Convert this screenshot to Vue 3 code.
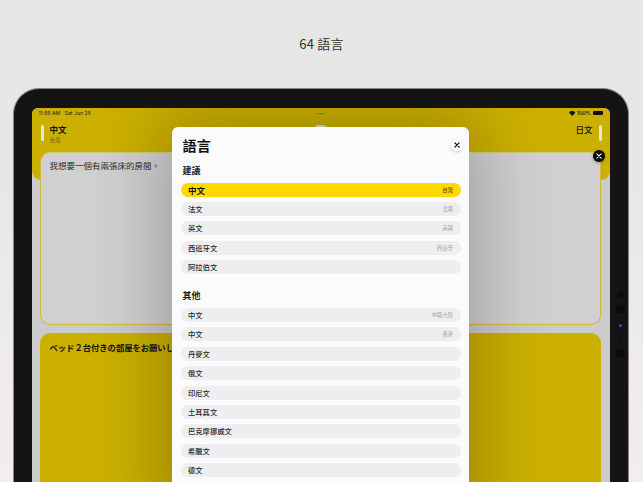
<script setup>
const suggested = [
  { name: '中文', region: '台灣', active: true },
  { name: '法文', region: '法國' },
  { name: '英文', region: '美國' },
  { name: '西班牙文', region: '西班牙' },
  { name: '阿拉伯文', region: '' },
]
const others = [
  { name: '中文', region: '中國大陸' },
  { name: '中文', region: '香港' },
  { name: '丹麥文', region: '' },
  { name: '俄文', region: '' },
  { name: '印尼文', region: '' },
  { name: '土耳其文', region: '' },
  { name: '巴克摩挪威文', region: '' },
  { name: '希臘文', region: '' },
  { name: '德文', region: '' },
]
const sensors = [
  { size: 7, gap: 0, color: '#0b0b0b' },
  { size: 9, gap: 7, color: '#0b0b0b' },
  { size: 3, gap: 10, color: '#1f58b0' },
  { size: 2, gap: 10.5, color: '#050505' },
  { size: 9, gap: 9.5, color: '#0b0b0b' },
]
</script>

<template>
  <div class="page">
    <h1 class="headline">64 語言</h1>
    <div class="device">
      <div class="screen">
        <header class="top">
          <div class="status">
            <span class="status-left">11:55 AM&nbsp;&nbsp; Sat Jun 25</span>
            <span class="status-dots">•••</span>
            <span class="status-right">
              <svg class="wifi" viewBox="0 0 12 9" width="6.5" height="5">
                <path d="M6 9 L0 2.6 C3.4 -.8 8.6 -.8 12 2.6 Z" fill="#111" />
              </svg>
              100%
              <span class="battery"></span>
            </span>
          </div>
          <div class="langs">
            <div class="lang-left">
              <span class="handle"></span>
              <div class="lang-text">
                <div class="lang-name">中文</div>
                <div class="lang-sub">台灣</div>
              </div>
            </div>
            <div class="lang-right">
              <div class="lang-text lang-name">日文</div>
              <span class="handle"></span>
            </div>
          </div>
        </header>

        <div class="cards">
          <section class="card card-source">
            我想要一個有兩張床的房間。
            <span class="dismiss">
              <svg viewBox="0 0 10 10" width="6" height="6">
                <path d="M1.5 1.5 L8.5 8.5 M8.5 1.5 L1.5 8.5" stroke="#fff" stroke-width="2" stroke-linecap="round" />
              </svg>
            </span>
          </section>
          <section class="card card-target">ベッド２台付きの部屋をお願いします。</section>
        </div>

        <div class="grabber"></div>
        <aside class="sheet">
          <div class="sheet-head">
            <h2 class="sheet-title">語言</h2>
            <span class="close">
              <svg viewBox="0 0 10 10" width="6" height="6">
                <path d="M1.5 1.5 L8.5 8.5 M8.5 1.5 L1.5 8.5" stroke="#111" stroke-width="2.2" stroke-linecap="round" />
              </svg>
            </span>
          </div>
          <h3 class="group-title">建議</h3>
          <ul class="rows">
            <li v-for="r in suggested" :key="r.name" class="row" :class="{ active: r.active }">
              <span>{{ r.name }}</span><small>{{ r.region }}</small>
            </li>
          </ul>
          <h3 class="group-title second">其他</h3>
          <ul class="rows">
            <li v-for="r in others" :key="r.name + r.region" class="row">
              <span>{{ r.name }}</span><small>{{ r.region }}</small>
            </li>
          </ul>
        </aside>
      </div>
      <div class="sensors">
        <i v-for="(s, i) in sensors" :key="i" :style="{ width: s.size + 'px', height: s.size + 'px', marginTop: s.gap + 'px', background: s.color }"></i>
      </div>
    </div>
  </div>
</template>

<style>
html, body { margin: 0; padding: 0; }
</style>

<style scoped>
.page {
  width: 643px;
  height: 482px;
  overflow: hidden;
  background: linear-gradient(180deg, #e6e6e6 0%, #e8e7e7 40%, #f3eeee 100%);
  font-family: "Noto Sans CJK TC", "Noto Sans", sans-serif;
  color: #111;
}
.headline {
  margin: 0;
  height: 88px;
  padding-top: 35px;
  box-sizing: border-box;
  text-align: center;
  font-size: 13px;
  line-height: 17px;
  font-weight: 400;
  color: #33332a;
  letter-spacing: .2px;
}
.device {
  position: relative;
  margin-left: 13px;
  width: 616px;
  height: 500px;
  box-sizing: border-box;
  padding: 18.5px 18.5px 0 17.5px;
  background: #141414;
  border: 1.5px solid #85858a;
  border-bottom: 0;
  border-radius: 26px 26px 0 0;
}
.screen {
  position: relative;
  height: 480px;
  overflow: hidden;
  border-radius: 6px 6px 0 0;
  background: #cbcbcb;
}
.top {
  height: 72px;
  box-sizing: border-box;
  background: #ccb000;
  border-radius: 0 0 9px 9px;
  padding: 2px 7px 0 7px;
}
.status {
  position: relative;
  display: flex;
  justify-content: space-between;
  align-items: center;
  height: 7px;
  font: 5.2px/7px "Inter", "Liberation Sans", sans-serif;
  color: #222;
}
.status-dots {
  position: absolute;
  left: 0;
  right: 0;
  text-align: center;
  font-size: 4px;
  color: #6c5f00;
  letter-spacing: .3px;
}
.status-right {
  display: flex;
  align-items: center;
  gap: 1.5px;
  font-weight: 600;
}
.battery {
  width: 10px;
  height: 4px;
  border-radius: 1px;
  background: #111;
}
.wifi { display: block; }
.langs {
  display: flex;
  justify-content: space-between;
  margin-top: 8px;
  padding-left: 2px;
  padding-right: 1px;
}
.lang-left, .lang-right {
  display: flex;
  gap: 6px;
}
.handle {
  display: block;
  width: 3px;
  height: 16px;
  border-radius: 2px;
  background: #e4e4e4;
}
.lang-text { margin-top: -2px; }
.lang-name {
  font-size: 8.5px;
  line-height: 12px;
  font-weight: 700;
  color: #111;
}
.lang-right .lang-name { font-weight: 500; }
.lang-sub {
  margin-top: 1px;
  font-size: 5.5px;
  line-height: 8px;
  color: #6f6200;
}
.cards {
  margin-top: -27.5px;
  padding: 0 8.5px 0 8px;
  position: relative;
  display: flex;
  flex-direction: column;
  gap: 8px;
}
.card {
  position: relative;
  border-radius: 10px;
  box-sizing: border-box;
  padding: 8px 10px;
  font-size: 8.3px;
  line-height: 13px;
}
.card-source {
  height: 173px;
  background: #d0d0d0;
  border: 1px solid #d2b93a;
  border-top-color: #d8cc7a;
  padding: 6px 9px;
  font-size: 8.5px;
  color: #2a2a2a;
}
.card-target {
  height: 300px;
  background: #ccb000;
  font-weight: 700;
  color: #111;
  font-family: "Noto Sans CJK JP", sans-serif;
  white-space: nowrap;
}
.dismiss {
  position: absolute;
  top: -3.5px;
  right: -4.5px;
  width: 12px;
  height: 12px;
  border-radius: 50%;
  background: #0a0a0a;
  display: flex;
  align-items: center;
  justify-content: center;
  box-shadow: 0 1px 3px rgba(0, 0, 0, .35);
}
.grabber {
  position: absolute;
  left: 283px;
  top: 17px;
  width: 11px;
  height: 5px;
  border-radius: 3px;
  background: #dcdcdc;
}
.sheet {
  position: absolute;
  left: 140px;
  top: 19px;
  width: 297px;
  height: 400px;
  box-sizing: border-box;
  padding: 0 8px 0 9px;
  background: #fbfbfb;
  border-radius: 6px 6px 0 0;
  box-shadow: 0 0 70px 12px rgba(0, 0, 0, .24);
}
.sheet-head {
  display: flex;
  justify-content: space-between;
  align-items: center;
  height: 36px;
  margin-bottom: 1px;
  padding: 0 0 0 2px;
}
.sheet-title {
  margin: 0;
  font-size: 14px;
  line-height: 20px;
  font-weight: 700;
  color: #111;
  letter-spacing: .3px;
}
.close {
  width: 12px;
  height: 12px;
  margin-right: -2px;
  border-radius: 50%;
  background: #fff;
  display: flex;
  align-items: center;
  justify-content: center;
  box-shadow: 0 1px 3px rgba(0, 0, 0, .2);
}
.group-title {
  margin: 0 0 6px 2px;
  font-size: 9px;
  line-height: 13px;
  font-weight: 700;
  color: #222;
}
.group-title.second { margin-top: 15px; margin-bottom: 6px; }
.rows {
  list-style: none;
  margin: 0;
  padding: 0;
  display: flex;
  flex-direction: column;
  gap: 5.4px;
}
.row {
  height: 14px;
  border-radius: 7px;
  background: #eeeef0;
  padding: 0 7.5px;
  display: flex;
  justify-content: space-between;
  align-items: center;
  font-size: 7.3px;
  font-weight: 500;
  color: #2a2a2a;
}
.row small {
  font-size: 5.4px;
  font-weight: 400;
  color: #a5a5a5;
}
.row.active {
  background: #ffd800;
  font-size: 8.5px;
  font-weight: 700;
  color: #111;
}
.row.active small { color: #5c5000; font-weight: 500; }
.sensors {
  position: absolute;
  left: 596px;
  top: 202px;
  width: 20px;
  display: flex;
  flex-direction: column;
  align-items: center;
}
.sensors i {
  display: block;
  border-radius: 50%;
}
</style>
